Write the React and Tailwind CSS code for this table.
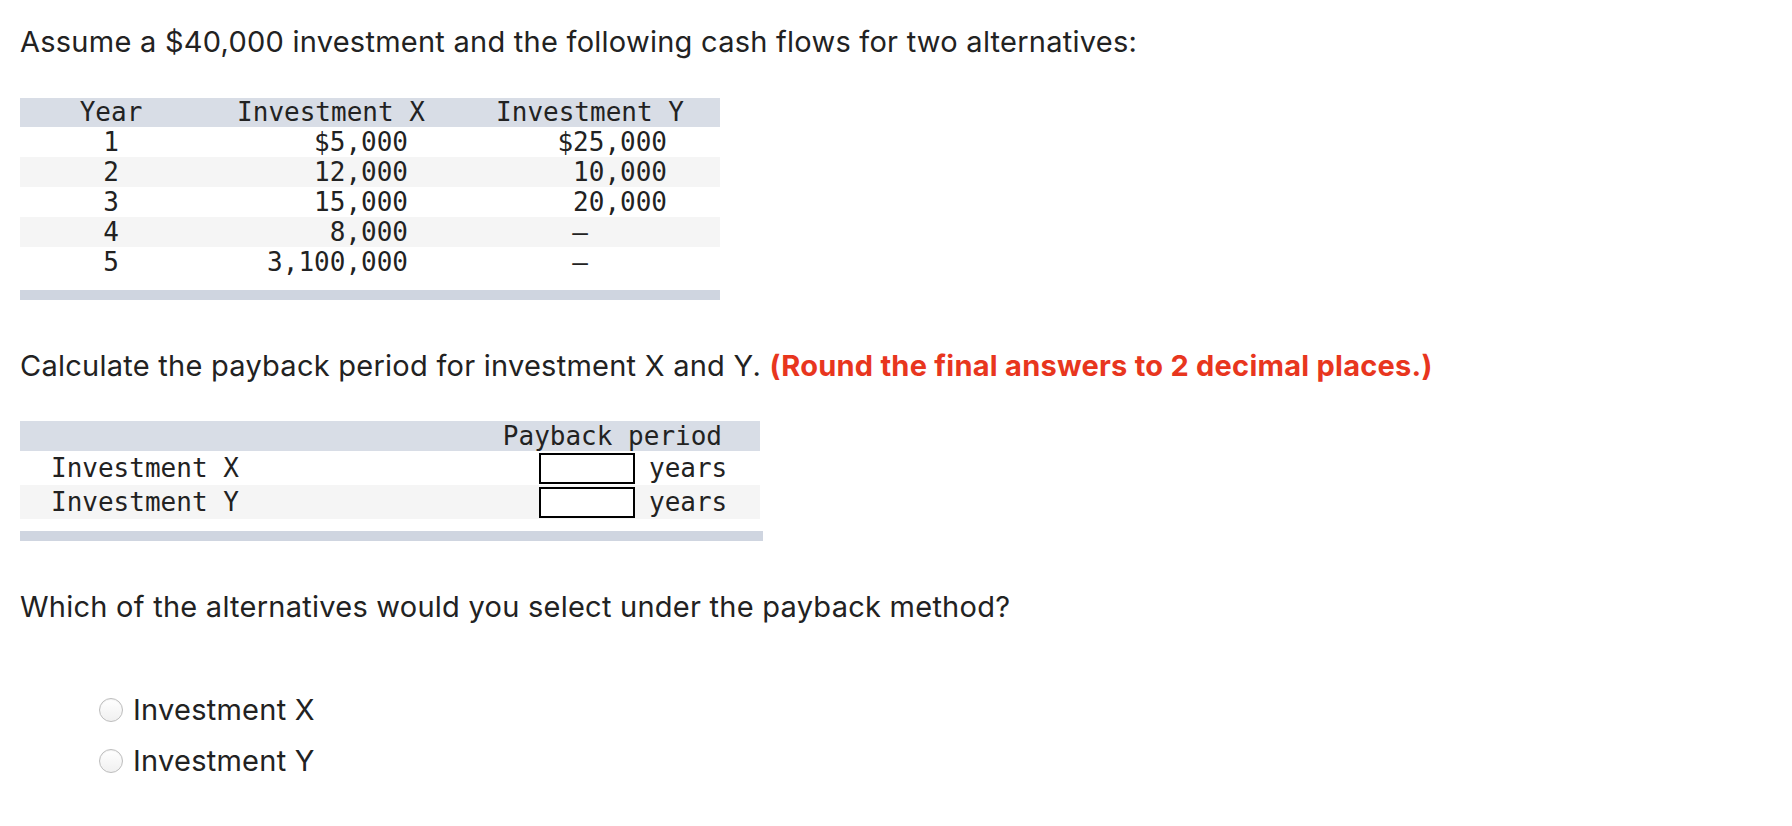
import { useState } from 'react'

const mono = 'font-["DejaVu_Sans_Mono",monospace] text-[26px] text-[#222]'

const cashFlows = [
  { year: 1, x: '$5,000', y: '$25,000' },
  { year: 2, x: '12,000', y: '10,000' },
  { year: 3, x: '15,000', y: '20,000' },
  { year: 4, x: '8,000', y: '–' },
  { year: 5, x: '3,100,000', y: '–' },
]

function CashFlowTable() {
  return (
    <div className={`w-[700px] ${mono}`}>
      <div className="grid h-[29px] grid-cols-[182px_258px_260px] items-center bg-[#d8dde6] leading-[29px]">
        <div className="text-center">Year</div>
        <div className="text-center">Investment X</div>
        <div className="text-center">Investment Y</div>
      </div>
      {cashFlows.map((r, i) => (
        <div
          key={r.year}
          className={`grid h-[30px] grid-cols-[182px_258px_260px] items-center leading-[30px] ${
            i % 2 === 1 ? 'bg-[#f5f5f5]' : 'bg-white'
          }`}
        >
          <div className="text-center">{r.year}</div>
          <div className="pr-[52px] text-right">{r.x}</div>
          <div className={r.y === '–' ? 'pr-[132px] text-right' : 'pr-[53px] text-right'}>
            {r.y}
          </div>
        </div>
      ))}
      <div className="mt-[13px] h-[10px] bg-[#cfd5e0]" />
    </div>
  )
}

function PaybackTable() {
  const [vals, setVals] = useState({ x: '', y: '' })
  const rows = [
    { key: 'x', label: 'Investment X' },
    { key: 'y', label: 'Investment Y' },
  ]
  return (
    <div className={mono}>
      <div className="flex h-[30px] w-[740px] items-center justify-end bg-[#d8dde6] pr-[38px] leading-[30px]">
        Payback period
      </div>
      {rows.map((r, i) => (
        <div
          key={r.key}
          className={`flex h-[34px] w-[740px] items-center leading-[30px] ${
            i % 2 === 1 ? 'bg-[#f5f5f5]' : 'bg-white'
          }`}
        >
          <div className="w-[519px] pl-[31px]">{r.label}</div>
          <input
            type="text"
            value={vals[r.key]}
            onChange={(e) => setVals({ ...vals, [r.key]: e.target.value })}
            className="h-[31px] w-[96px] border-2 border-black bg-white px-1 outline-none"
          />
          <div className="pl-[14px]">years</div>
        </div>
      ))}
      <div className="mt-[12px] h-[10px] w-[743px] bg-[#cfd5e0]" />
    </div>
  )
}

export default function App() {
  const [choice, setChoice] = useState(null)

  return (
    <div className='min-h-screen bg-white pl-[20px] font-["Inter",sans-serif] text-[29px] tracking-[0.25px] text-[#222]'>
      <p className="pt-[24px] leading-[36px]">
        Assume a $40,000 investment and the following cash flows for two alternatives:
      </p>

      <div className="mt-[38px] tracking-normal">
        <CashFlowTable />
      </div>

      <p className="mt-[48px] leading-[36px]">
        Calculate the payback period for investment X and Y.{' '}
        <span className="font-bold text-[#e8361e]">
          (Round the final answers to 2 decimal places.)
        </span>
      </p>

      <div className="mt-[37px] tracking-normal">
        <PaybackTable />
      </div>

      <p className="mt-[48px] leading-[36px]">
        Which of the alternatives would you select under the payback method?
      </p>

      <div className="mt-[73px] flex flex-col gap-[27px] pl-[79px]">
        {['Investment X', 'Investment Y'].map((opt) => (
          <label key={opt} className="flex cursor-pointer items-center gap-[10px] leading-[24px]">
            <input
              type="radio"
              name="alt"
              checked={choice === opt}
              onChange={() => setChoice(opt)}
              className="peer sr-only"
            />
            <span className="flex h-[24px] w-[24px] items-center justify-center rounded-full border border-[#bdbdbd] bg-gradient-to-b from-white to-[#f0f0f0] shadow-[inset_0_1px_1px_rgba(0,0,0,0.06)]">
              {choice === opt && <span className="h-[10px] w-[10px] rounded-full bg-[#333]" />}
            </span>
            <span>{opt}</span>
          </label>
        ))}
      </div>
    </div>
  )
}
